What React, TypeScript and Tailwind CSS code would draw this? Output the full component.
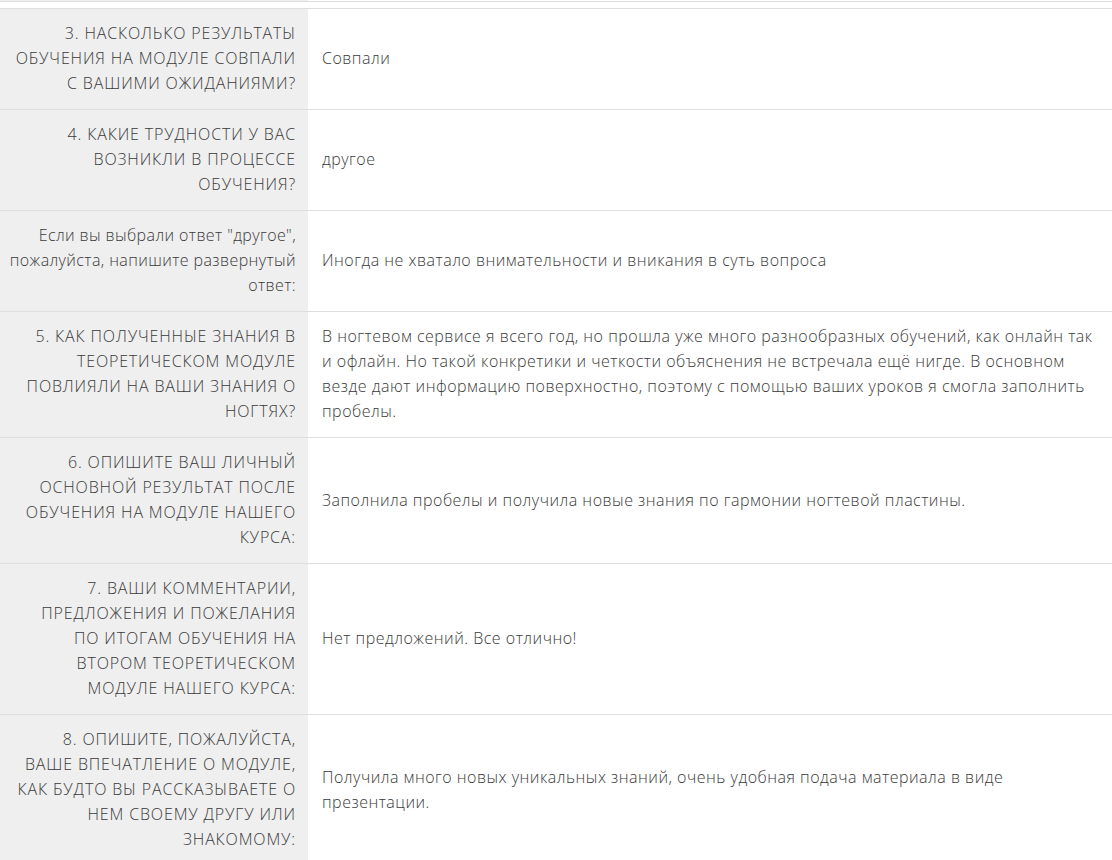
const rows: { q: string[]; a: string[]; caps?: boolean }[] = [
  {
    q: ["3. НАСКОЛЬКО РЕЗУЛЬТАТЫ", "ОБУЧЕНИЯ НА МОДУЛЕ СОВПАЛИ", "С ВАШИМИ ОЖИДАНИЯМИ?"],
    a: ["Совпали"],
    caps: true,
  },
  {
    q: ["4. КАКИЕ ТРУДНОСТИ У ВАС", "ВОЗНИКЛИ В ПРОЦЕССЕ", "ОБУЧЕНИЯ?"],
    a: ["другое"],
    caps: true,
  },
  {
    q: ["Если вы выбрали ответ \"другое\",", "пожалуйста, напишите развернутый", "ответ:"],
    a: ["Иногда не хватало внимательности и вникания в суть вопроса"],
  },
  {
    q: ["5. КАК ПОЛУЧЕННЫЕ ЗНАНИЯ В", "ТЕОРЕТИЧЕСКОМ МОДУЛЕ", "ПОВЛИЯЛИ НА ВАШИ ЗНАНИЯ О", "НОГТЯХ?"],
    a: [
      "В ногтевом сервисе я всего год, но прошла уже много разнообразных обучений, как онлайн так",
      "и офлайн. Но такой конкретики и четкости объяснения не встречала ещё нигде. В основном",
      "везде дают информацию поверхностно, поэтому с помощью ваших уроков я смогла заполнить",
      "пробелы.",
    ],
    caps: true,
  },
  {
    q: ["6. ОПИШИТЕ ВАШ ЛИЧНЫЙ", "ОСНОВНОЙ РЕЗУЛЬТАТ ПОСЛЕ", "ОБУЧЕНИЯ НА МОДУЛЕ НАШЕГО", "КУРСА:"],
    a: ["Заполнила пробелы и получила новые знания по гармонии ногтевой пластины."],
    caps: true,
  },
  {
    q: [
      "7. ВАШИ КОММЕНТАРИИ,",
      "ПРЕДЛОЖЕНИЯ И ПОЖЕЛАНИЯ",
      "ПО ИТОГАМ ОБУЧЕНИЯ НА",
      "ВТОРОМ ТЕОРЕТИЧЕСКОМ",
      "МОДУЛЕ НАШЕГО КУРСА:",
    ],
    a: ["Нет предложений. Все отлично!"],
    caps: true,
  },
  {
    q: [
      "8. ОПИШИТЕ, ПОЖАЛУЙСТА,",
      "ВАШЕ ВПЕЧАТЛЕНИЕ О МОДУЛЕ,",
      "КАК БУДТО ВЫ РАССКАЗЫВАЕТЕ О",
      "НЕМ СВОЕМУ ДРУГУ ИЛИ",
      "ЗНАКОМОМУ:",
    ],
    a: [
      "Получила много новых уникальных знаний, очень удобная подача материала в виде",
      "презентации.",
    ],
    caps: true,
  },
];

export default function App() {
  return (
    <div
      className="w-[1112px] h-[860px] overflow-hidden bg-white text-[16px] leading-[25px] font-light text-[#3a3a3a]"
      style={{ fontFamily: "'Open Sans', 'Liberation Sans', sans-serif" }}
    >
      {/* tail of the previous row */}
      <div className="grid grid-cols-[308px_1fr] h-px">
        <div className="bg-[#efefef]" />
        <div />
      </div>
      <div className="h-[7px] border-t border-[#dedede]" />
      {rows.map((row, i) => (
        <div key={i} className="grid grid-cols-[308px_1fr] border-t border-[#dedede]">
          <div
            className={
              "bg-[#efefef] pl-2 pr-3 pt-3 pb-[13px] text-right flex flex-col justify-center " +
              (row.caps ? "tracking-[0.85px]" : "tracking-[0.4px]")
            }
          >
            {row.q.map((line, j) => (
              <div key={j} className="whitespace-nowrap">
                {line}
              </div>
            ))}
          </div>
          <div className="pl-[14px] pr-3 pt-3 pb-[13px] flex flex-col justify-center tracking-[0.5px]">
            {row.a.map((line, j) => (
              <div key={j} className="whitespace-nowrap">
                {line}
              </div>
            ))}
          </div>
        </div>
      ))}
    </div>
  );
}
